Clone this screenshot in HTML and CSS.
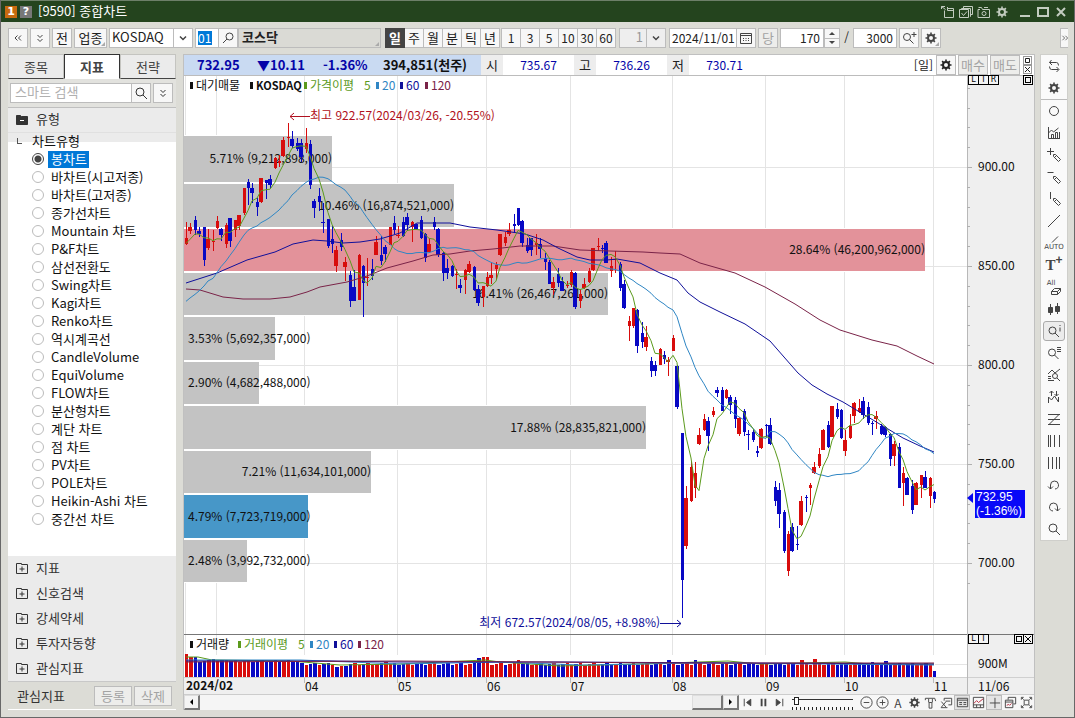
FILE: index.html
```html
<!DOCTYPE html>
<html lang="ko">
<head>
<meta charset="utf-8">
<title>[9590] 종합차트</title>
<link rel="stylesheet" href="styles.css">
</head>
<body>
<svg class="sprite" aria-hidden="true">
  <symbol id="dleft" viewBox="0 0 16 16"><path d="M7.500 5.500 5 8l2.500 2.500M11 5.500 8.500 8l2.500 2.500"/></symbol>
  <symbol id="dright" viewBox="0 0 16 16"><path d="M4.500 5l3 3-3 3M8.500 5l3 3-3 3"/></symbol>
  <symbol id="ddown" viewBox="0 0 16 16"><path d="M5.500 5 8 7.500 10.500 5M5.500 9 8 11.500 10.500 9"/></symbol>
  <symbol id="mag" viewBox="0 0 16 16"><circle cx="7" cy="7" r="4"/><path d="m10 10 4 4"/></symbol>
  <symbol id="magr" viewBox="0 0 16 16"><circle cx="9.500" cy="6.500" r="3.500"/><path d="m7 9-4 4"/></symbol>
  <symbol id="magplus" viewBox="0 0 16 16"><circle cx="6" cy="7" r="3.500"/><path d="m8.500 9.500 4 4M13 2v5M10.500 4.500h5"/></symbol>
  <symbol id="maginfo" viewBox="0 0 16 16"><circle cx="6.500" cy="7.500" r="3.500"/><path d="m9 10 4 4M14 2v1M14 4.500v4"/></symbol>
  <symbol id="maglist" viewBox="0 0 16 16"><circle cx="6" cy="7.500" r="3.500"/><path d="m8.500 10 4 4M11 2.500h4M11 4.500h4M11 6.500h4"/></symbol>
  <symbol id="gear" viewBox="0 0 16 16"><circle cx="8" cy="8" r="3" stroke-width="2"/><path stroke-width="1.600" d="M8 2.500v2M8 11.500v2M2.500 8h2M11.500 8h2M4.100 4.100l1.300 1.300M10.600 10.600l1.300 1.300M4.100 11.900l1.300-1.300M10.600 5.400l1.300-1.300"/></symbol>
  <symbol id="cal" viewBox="0 0 16 16"><path d="M2.500 3.500h11v10h-11zM2.500 5.500h11M5 8.500h1M7.500 8.500h1M10 8.500h1M5 10.500h1M7.500 10.500h1M10 10.500h1"/></symbol>
  <symbol id="wshare" viewBox="0 0 16 16"><path d="M7.500 4.500V3M4.500 6.500v7h9v-9h-6v2h6M1.500 2.500l4 3M1.500 5V2.500H5"/></symbol>
  <symbol id="wcheck" viewBox="0 0 16 16"><path d="M5.500 4V2.500h9v8H13M3.500 5V4.500h9v8H12M1.500 5.500h9v8h-9zM3.500 9l2 2.500 3.500-4"/></symbol>
  <symbol id="wcam" viewBox="0 0 16 16"><path d="M2.500 3.500h3l1 2h7v8h-11.500v-8h2M8 3.500h4"/><circle cx="8" cy="9.500" r="2"/></symbol>
  <symbol id="wmin" viewBox="0 0 16 16"><path stroke-width="2" d="M3 12h10"/></symbol>
  <symbol id="wmax" viewBox="0 0 16 16"><path stroke-width="2" d="M3 4h10v8H3z"/></symbol>
  <symbol id="wclose" viewBox="0 0 16 16"><path stroke-width="2" d="m4 4 8 8M12 4l-8 8"/></symbol>
  <symbol id="folder" viewBox="0 0 16 16"><path fill="currentColor" d="M2.500 4.500h4l1 1h6v8h-11z"/><path stroke="#fff" d="M6 9.500h4"/></symbol>
  <symbol id="plusbox" viewBox="0 0 16 16"><path d="M2.500 3.500h5v1h6v9h-11zM5.500 9h5M8 6.500v5"/></symbol>
  <symbol id="loop" viewBox="0 0 16 16"><path d="M5.500 2 3.500 4.500 6 7M3.500 4.500h7q2 0 2 3M10.500 9l2.500 2.500L10.500 14M12.500 11.500h-7q-2 0-2-3"/></symbol>
  <symbol id="circ" viewBox="0 0 16 16"><circle cx="8" cy="8" r="4.500"/></symbol>
  <symbol id="graph" viewBox="0 0 16 16"><path d="M2.500 2v11.500H14M2.500 8l3-3 2 2 5-4M5.500 13V9.500h2V13M9.500 13V7.500h2V13M13.500 13V7"/></symbol>
  <symbol id="penplus" viewBox="0 0 16 16"><path d="M4.500 1v7M1 4.500h7M7.500 7.500h2l5 5-2 2-5-5zM10.500 8.500l-2 2"/></symbol>
  <symbol id="penminus" viewBox="0 0 16 16"><path d="M1.500 3.500h6M7.500 7.500h2l5 5-2 2-5-5zM10.500 8.500l-2 2"/></symbol>
  <symbol id="penbar" viewBox="0 0 16 16"><path d="M4.500 1v7M7.500 7.500h2l5 5-2 2-5-5zM10.500 8.500l-2 2"/></symbol>
  <symbol id="slash" viewBox="0 0 16 16"><path d="M2 14 14 2"/></symbol>
  <symbol id="slashs" viewBox="0 0 16 8"><path d="M6 7.500 12 1.500"/></symbol>
  <symbol id="eraser" viewBox="0 0 16 9"><path d="M8.500 1.500h6l-3 3h-6zM5.500 4.500v3h6l3-3v-3M11.500 4.500v3"/></symbol>
  <symbol id="candles" viewBox="0 0 16 16"><path d="M4.500 3v11M11.500 2v11"/><path fill="currentColor" d="M2.500 6.500h4v5h-4zM9.500 5.500h4v5h-4z"/></symbol>
  <symbol id="chartmag" viewBox="0 0 16 16"><path d="M2 7l4-4 3 3 5-4M2 9.500h3M2 11.500h3M2 13.500h6"/><circle cx="9" cy="9" r="2.500"/><path d="m11 11 3 3"/></symbol>
  <symbol id="updown" viewBox="0 0 16 16"><path d="M2.500 14V8l3 3 3-4 4 6V8M5.500 7V2M3.500 4l2-2 2 2M10.500 2v5M8.500 5l2 2 2-2"/></symbol>
  <symbol id="zlines" viewBox="0 0 16 16"><path d="M2 3.500h12M2 8.500h12M2 13.500h12M13 3.500l-10 10"/></symbol>
  <symbol id="bars1" viewBox="0 0 16 16"><path d="M2.500 2v12M4.500 2v12M8.500 2v12M13.500 2v12"/></symbol>
  <symbol id="bars2" viewBox="0 0 16 16"><path d="M2.500 2v12M6.500 2v12M10.500 2v12M13.500 2v12"/></symbol>
  <symbol id="undo" viewBox="0 0 16 16"><path d="M4.500 12V8a4 4 0 1 1 4.500 4M2 9.500 4.500 12 7 9.500"/></symbol>
  <symbol id="redo" viewBox="0 0 16 16"><path d="M11.500 12V8A4 4 0 1 0 7 12M9 9.500l2.500 2.500L14 9.500"/></symbol>
  <symbol id="first" viewBox="0 0 16 16"><path d="M4.500 4v8"/><path fill="currentColor" d="M11.500 4.500v7L7 8z"/></symbol>
  <symbol id="pause" viewBox="0 0 16 16"><path stroke-width="2" d="M6 4v8M10 4v8"/></symbol>
  <symbol id="last" viewBox="0 0 16 16"><path d="M11.500 4v8"/><path fill="currentColor" d="M4.500 4.500v7L9 8z"/></symbol>
  <symbol id="cminus" viewBox="0 0 16 16"><circle cx="8" cy="8" r="6"/><path d="M5 8h6"/></symbol>
  <symbol id="cplus" viewBox="0 0 16 16"><circle cx="8" cy="8" r="6"/><path d="M5 8h6M8 5v6"/></symbol>
  <symbol id="hammer" viewBox="0 0 16 16"><path d="M2.500 5.500v-2h10l1 3M6 4v4M10 4v4M6.500 8h3v6h-3z"/></symbol>
  <symbol id="export" viewBox="0 0 16 16"><path d="M5.500 6V3.500h8v7H10M7 6.500h5M2.500 7l5 6M7.500 7l-5 6M2 13.500h7"/></symbol>
  <symbol id="panel" viewBox="0 0 16 16"><path d="M2.500 3.500h11v9h-11zM2.500 5.500h11M4.500 8h3M4.500 10h3M9 8h3M9 10h3"/></symbol>
  <symbol id="mini" viewBox="0 0 16 16"><path d="M2.500 2.500h11v11h-11zM2.500 10.500h11M6 10.500v3M10 10.500v3"/><path stroke="#b3263c" d="m3 9 3-3 2 2 5-4"/></symbol>
  <symbol id="cross" viewBox="0 0 16 16"><path d="M8.500 3v11M3 8.500h11"/></symbol>
  <symbol id="stack" viewBox="0 0 16 16"><path d="M5.500 5V2.500h8v7H11M2.500 5.500h8v8h-8zM2.500 7.500h8"/><path stroke="#b3263c" d="m4 11 2-1 1 1 2-2"/></symbol>
  <symbol id="full" viewBox="0 0 16 16"><path d="M5.500 5.500h5v5h-5zM2.500 5V2.500H5M11 2.500h2.500V5M13.500 11v2.500H11M5 13.500H2.500V11M3 3l2 2M13 3l-2 2M3 13l2-2M13 13l-2-2"/></symbol>
</svg>

<div class="window">
  <header class="titlebar">
    <span class="badge badge-one">1</span><span class="badge badge-help">?</span>
    <h1 class="title">[9590] 종합차트</h1>
    <div class="wintools">
      <button aria-label="내보내기"><svg><use href="#wshare"/></svg></button>
      <button aria-label="창 선택"><svg><use href="#wcheck"/></svg></button>
      <button aria-label="화면 캡처"><svg><use href="#wcam"/></svg></button>
      <button aria-label="환경설정"><svg><use href="#gear"/></svg></button>
    </div>
    <div class="winbtns">
      <button aria-label="최소화"><svg><use href="#wmin"/></svg></button>
      <button aria-label="최대화"><svg><use href="#wmax"/></svg></button>
      <button aria-label="닫기"><svg><use href="#wclose"/></svg></button>
    </div>
  </header>

  <div class="toolbar">
    <button class="btn sq" aria-label="이전"><svg><use href="#dleft"/></svg></button>
    <button class="btn sq" aria-label="펼치기"><svg><use href="#ddown"/></svg></button>
    <button class="btn sq">전</button>
    <button class="btn wide corner">업종</button>
    <select class="pick market" aria-label="시장"><option>KOSDAQ</option></select>
    <div class="joined">
      <div class="code"><input class="codein" value="01" aria-label="업종코드"></div>
      <button class="btn sq" aria-label="종목 찾기"><svg><use href="#magr"/></svg></button>
      <output class="name corner">코스닥</output>
    </div>
    <div class="group periods">
      <button class="btn on">일</button><button class="btn">주</button><button class="btn">월</button><button class="btn">분</button><button class="btn">틱</button><button class="btn">년</button>
    </div>
    <div class="group">
      <button class="btn">1</button><button class="btn">3</button><button class="btn">5</button><button class="btn">10</button><button class="btn">30</button><button class="btn">60</button>
    </div>
    <select class="pick unit" aria-label="주기" disabled><option>1</option></select>
    <div class="joined">
      <input class="field date" value="2024/11/01" aria-label="조회일">
      <button class="btn sq" aria-label="달력"><svg><use href="#cal"/></svg></button>
    </div>
    <button class="btn sq" disabled>당</button>
    <div class="joined">
      <input class="field count" value="170" aria-label="표시 개수">
      <div class="spin"><button aria-label="증가"><i class="up"></i></button><button aria-label="감소"><i class="down"></i></button></div>
    </div>
    <span class="sep">/</span>
    <input class="field count" value="3000" aria-label="전체 개수">
    <button class="btn sq" aria-label="확대"><svg><use href="#magplus"/></svg></button>
    <button class="btn sq corner" aria-label="설정"><svg><use href="#gear"/></svg></button>
    <button class="btn more" aria-label="더보기"><svg><use href="#dright"/></svg></button>
  </div>

  <div class="content">
    <aside class="side">
      <nav class="tabs"><button class="tab">종목</button><button class="tab active">지표</button><button class="tab">전략</button></nav>
      <div class="search">
        <input class="searchin" placeholder="스마트 검색" aria-label="스마트 검색">
        <button class="btn sq" aria-label="검색"><svg><use href="#mag"/></svg></button>
        <button class="btn sq fold" aria-label="펼치기"><svg><use href="#ddown"/></svg></button>
      </div>
      <button class="cat open"><svg><use href="#folder"/></svg>유형</button>
      <fieldset class="tree">
        <legend>차트유형</legend>
        <label><input type="radio" name="t" checked><span>봉차트</span></label>
        <label><input type="radio" name="t"><span>바차트(시고저종)</span></label>
        <label><input type="radio" name="t"><span>바차트(고저종)</span></label>
        <label><input type="radio" name="t"><span>종가선차트</span></label>
        <label><input type="radio" name="t"><span>Mountain 차트</span></label>
        <label><input type="radio" name="t"><span>P&amp;F차트</span></label>
        <label><input type="radio" name="t"><span>삼선전환도</span></label>
        <label><input type="radio" name="t"><span>Swing차트</span></label>
        <label><input type="radio" name="t"><span>Kagi차트</span></label>
        <label><input type="radio" name="t"><span>Renko차트</span></label>
        <label><input type="radio" name="t"><span>역시계곡선</span></label>
        <label><input type="radio" name="t"><span>CandleVolume</span></label>
        <label><input type="radio" name="t"><span>EquiVolume</span></label>
        <label><input type="radio" name="t"><span>FLOW차트</span></label>
        <label><input type="radio" name="t"><span>분산형차트</span></label>
        <label><input type="radio" name="t"><span>계단 차트</span></label>
        <label><input type="radio" name="t"><span>점 차트</span></label>
        <label><input type="radio" name="t"><span>PV차트</span></label>
        <label><input type="radio" name="t"><span>POLE차트</span></label>
        <label><input type="radio" name="t"><span>Heikin-Ashi 차트</span></label>
        <label><input type="radio" name="t"><span>중간선 차트</span></label>
      </fieldset>
      <button class="cat"><svg><use href="#plusbox"/></svg>지표</button>
      <button class="cat"><svg><use href="#plusbox"/></svg>신호검색</button>
      <button class="cat"><svg><use href="#plusbox"/></svg>강세약세</button>
      <button class="cat"><svg><use href="#plusbox"/></svg>투자자동향</button>
      <button class="cat"><svg><use href="#plusbox"/></svg>관심지표</button>
      <div class="sidefoot"><span>관심지표</span><button class="btn" disabled>등록</button><button class="btn" disabled>삭제</button></div>
    </aside>

    <main class="main">
      <div class="quote">
        <div class="now"><b class="last">732.95</b><b class="diff">▼10.11</b><b class="rate">-1.36%</b><b class="vol">394,851(천주)</b></div>
        <span class="k">시</span><span class="v">735.67</span>
        <span class="k">고</span><span class="v">736.26</span>
        <span class="k">저</span><span class="v">730.71</span>
        <span class="mode">[일]</span>
        <button class="btn sq" aria-label="차트 설정"><svg><use href="#gear"/></svg></button>
        <button class="btn trade" disabled>매수</button>
        <button class="btn trade" disabled>매도</button>
        <div class="mini">
          <button aria-label="확대"><svg viewBox="0 0 9 9"><path d="M2.500 2.500h4v4h-4z"/></svg></button>
          <button aria-label="닫기"><svg viewBox="0 0 9 9"><path d="m2 2 5 5M7 2 2 7"/></svg></button>
        </div>
      </div>
      <div class="stage">
        <svg id="chart" class="chart" viewBox="184 76 850 618" role="img" aria-label="KOSDAQ 일봉 차트"></svg>
        <div class="tags tags-l"><button>L</button><button>I</button><button>R</button></div>
        <div class="tags tags-r"><button aria-label="확대"><i></i></button></div>
        <div class="tags tags-l low"><button>L</button><button>I</button></div>
        <div class="tags tags-r low"><button aria-label="확대"><i></i></button><button aria-label="닫기"><svg viewBox="0 0 8 8"><path d="m1 1 6 6M7 1 1 7"/></svg></button></div>
      </div>
      <div class="bottom">
        <div class="scroll"><button class="sbtn" aria-label="왼쪽"><i class="lt"></i></button><div class="track"><div class="thumb"></div></div><button class="sbtn" aria-label="오른쪽"><i class="rt"></i></button></div>
        <div class="play">
          <button aria-label="처음"><svg><use href="#first"/></svg></button>
          <button aria-label="일시정지"><svg><use href="#pause"/></svg></button>
          <button aria-label="마지막"><svg><use href="#last"/></svg></button>
        </div>
        <input class="speed" type="range" min="0" max="100" value="4" aria-label="속도">
        <div class="play tools">
          <button aria-label="축소"><svg><use href="#cminus"/></svg></button>
          <button aria-label="확대"><svg><use href="#cplus"/></svg></button>
          <button>A</button>
          <button aria-label="설정"><svg><use href="#gear"/></svg></button>
          <button aria-label="도구"><svg><use href="#hammer"/></svg></button>
          <button aria-label="내보내기"><svg><use href="#export"/></svg></button>
          <button class="sel" aria-label="데이터"><svg><use href="#panel"/></svg></button>
          <button aria-label="미니차트"><svg><use href="#mini"/></svg></button>
          <button class="sel" aria-label="십자선"><svg><use href="#cross"/></svg></button>
          <button aria-label="겹치기"><svg><use href="#stack"/></svg></button>
          <button aria-label="전체화면"><svg><use href="#full"/></svg></button>
        </div>
      </div>
    </main>

    <nav class="rail">
      <button aria-label="새로고침"><svg><use href="#loop"/></svg></button>
      <button class="cut" aria-label="설정"><svg><use href="#gear"/></svg></button>
      <button aria-label="원"><svg><use href="#circ"/></svg></button>
      <button aria-label="그래프"><svg><use href="#graph"/></svg></button>
      <button aria-label="십자 그리기"><svg><use href="#penplus"/></svg></button>
      <button aria-label="수평선 그리기"><svg><use href="#penminus"/></svg></button>
      <button aria-label="수직선 그리기"><svg><use href="#penbar"/></svg></button>
      <button aria-label="추세선"><svg><use href="#slash"/></svg></button>
      <button class="auto"><svg><use href="#slashs"/></svg><span>AUTO</span></button>
      <button class="letter">T<sup>+</sup></button>
      <button class="all"><span>All</span><svg><use href="#eraser"/></svg></button>
      <button aria-label="봉"><svg><use href="#candles"/></svg></button>
      <button class="sel" aria-label="정보"><svg><use href="#maginfo"/></svg></button>
      <button aria-label="목록"><svg><use href="#maglist"/></svg></button>
      <button aria-label="차트 검색"><svg><use href="#chartmag"/></svg></button>
      <button aria-label="등락"><svg><use href="#updown"/></svg></button>
      <button aria-label="되돌림"><svg><use href="#zlines"/></svg></button>
      <button aria-label="피보나치 시간대"><svg><use href="#bars1"/></svg></button>
      <button aria-label="등간격선"><svg><use href="#bars2"/></svg></button>
      <button aria-label="실행 취소"><svg><use href="#undo"/></svg></button>
      <button aria-label="다시 실행"><svg><use href="#redo"/></svg></button>
      <button aria-label="돋보기"><svg><use href="#mag"/></svg></button>
    </nav>
  </div>
</div>
<script src="chart.js"></script>
</body>
</html>
```
FILE: styles.css
```css
* { box-sizing: border-box; }
body { margin: 0; font: 13px/16px "Noto Sans CJK KR", "Noto Sans", sans-serif; color: #222; }
button, input, select, output { font: inherit; color: inherit; margin: 0; padding: 0; border-radius: 0; }
button { background: none; border: 0; display: flex; align-items: center; justify-content: center; }
svg { width: 16px; height: 16px; fill: none; stroke: currentColor; flex: none; }
.sprite { display: none; }

.window { min-height: 100vh; display: flex; flex-direction: column; background: #dcdcd6; border: 1px solid #686868; border-top: 0; }
.titlebar { height: 22px; display: flex; align-items: center; gap: 3px; padding: 0 5px 0 4px; background: #24441e; border-top: 1px solid #6d7f69; color: #dfe5dc; }
.badge { width: 12px; height: 12px; font: bold 11px/12px "DejaVu Sans", sans-serif; text-align: center; color: #fff; }
.badge-one { background: #c76a10; }
.badge-help { background: #777; }
.title { flex: 1; margin: 0 0 0 3px; padding-bottom: 2px; font-size: 13px; font-weight: 400; color: #fff; }
.wintools, .winbtns { display: flex; gap: 2px; color: #c3ccc0; }
.winbtns { margin-left: 4px; }

.toolbar { display: flex; gap: 2px; padding: 6px 6px 6px 7px; height: 32px; font-size: 12px; }
.toolbar svg { color: #444; }
.btn { height: 20px; background: #f7f7f7; border: 1px solid #bcbcbc; position: relative; white-space: nowrap; font-size: 13px; }
.btn:disabled { color: #a3a3a3; background: #ededeb; }
.sq { width: 20px; flex: none; }
.wide { width: 33px; }
.corner { position: relative; }
.corner::after { content: ""; position: absolute; right: 1px; bottom: 1px; border: 2px solid #aaa; border-top-color: transparent; border-left-color: transparent; }
.pick { height: 20px; border: 1px solid #bcbcbc; background-color: #fff; appearance: none; padding: 0 22px 2px 2px; font-size: 13px; line-height: 16px;
  background-image: url("data:image/svg+xml,%3Csvg xmlns='http://www.w3.org/2000/svg' width='19' height='18' fill='none'%3E%3Cpath stroke='%23bcbcbc' d='M.5 0v18'/%3E%3Cpath stroke='%23444' stroke-width='1.500' d='m7 7.500 3 3 3-3'/%3E%3C/svg%3E");
  background-position: right center; background-repeat: no-repeat; }
.market { width: 84px; }
.unit { width: 47px; text-align-last: right; color: #999; background-color: #eee; opacity: 1; margin: 0 1px; }
.joined { display: flex; }
.code { width: 23px; height: 20px; padding: 2px; background: #fff; border: 1px solid #bcbcbc; border-right: 0; }
.codein { display: block; width: 14px; height: 14px; border: 0; background: #0078d7; color: #fff; font-size: 12px; line-height: 14px; }
.name { width: 143px; height: 20px; padding: 0 3px; font-weight: 700; border: 1px solid #bcbcbc; background: #dadad5; font-size: 13px; }
.group { display: flex; }
.group .btn { width: 19px; border-left-width: 0; font-size: 12px; }
.group .btn:first-child { border-left-width: 1px; width: 20px; }
.periods { margin-left: 2px; margin-right: -1px; }
.periods .btn { font-size: 13px; }
.group .on { background: #444; border-color: #444; color: #fff; font-weight: 700; }
.field { height: 20px; border: 1px solid #bcbcbc; background: #fff; padding: 0 3px 2px; font-size: 12px; }
.date { width: 67px; padding: 0 0 2px 2px; border-right: 0; }
.count { width: 44px; text-align: right; }
.spin { width: 16px; display: flex; flex-direction: column; background: #f7f7f7; border: 1px solid #bcbcbc; }
.spin button { flex: 1; }
.spin button + button { border-top: 1px solid #bcbcbc; }
.up, .down { border: 3px solid transparent; }
.up { border-top: 0; border-bottom-color: #444; }
.down { border-bottom: 0; border-top-color: #444; }
.sep { width: 9px; text-align: center; line-height: 18px; }
.more { width: 8px; margin-left: auto; border-right: 0; }
.more svg { width: 12px; height: 12px; }

.content { flex: 1; display: flex; padding: 0 6px 7px 7px; align-items: stretch; }
.side { width: 168px; flex: none; display: flex; flex-direction: column; background: #ebebeb; color: #333; }
.tabs { display: flex; height: 25px; background: #dcdcd6; }
.tab { flex: 1; background: #ebebeb; border: 1px solid #c4c4c0; border-bottom-color: #444; color: #444; }
.tab.active { background: #fff; border-color: #333; border-bottom-color: #fff; font-weight: 700; }
.search { display: flex; height: 28px; padding: 4px 3px 4px 2px; background: #e2e2de; }
.searchin { flex: 1; min-width: 0; border: 1px solid #bcbcbc; border-right: 0; background: #fff; padding: 0 0 2px 4px; }
.searchin::placeholder { color: #b0b0b0; }
.fold { margin-left: 2px; }
.cat { height: 25px; justify-content: flex-start; padding: 0 0 2px 6px; gap: 6px; text-align: left; color: #333; }
.open { height: 26px; border-top: 1px solid #bfbfbf; border-bottom: 1px solid #e0e0e0; }
.tree { flex: 1; min-width: 0; margin: 0; padding: 0; border: 0; background: #fff; color: #111; }
.tree legend { position: relative; padding: 0 0 0 24px; height: 17px; }
.tree legend::before { content: ""; position: absolute; left: 9px; top: 5px; width: 4px; height: 5px; border-left: 1px solid #555; border-bottom: 1px solid #555; }
.tree label { display: flex; align-items: center; height: 18px; padding-left: 24px; }
.tree input { appearance: none; width: 12px; height: 12px; border: 1px solid #bbb; border-radius: 50%; background: #fff; }
.tree input:checked { border-color: #444; background: radial-gradient(#444 0 3px, #fff 4px); }
.tree span { margin-left: 4px; padding: 0 2px 2px 3px; line-height: 15px; }
.tree input:checked + span { background: #0078d7; color: #fff; }
.sidefoot { display: flex; align-items: center; gap: 2px; height: 29px; padding: 0 4px 0 9px; background: #dcdcd6; border-top: 1px solid #c8c8c8; border-bottom: 1px solid #fff; }
.sidefoot span { flex: 1; font-size: 13px; }
.sidefoot .btn { width: 38px; }

.main { flex: 1; min-width: 0; margin: 0 5px 0 7px; border: 1px solid #c0c0c0; border-bottom: 0; background: #f0f0f0; display: flex; flex-direction: column; }
.quote { display: flex; align-items: center; height: 21px; background: #fff; border-bottom: 1px solid #bcbcbc; font-size: 12px; }
.quote .btn { margin-right: 2px; }
.now { display: flex; align-items: center; height: 100%; width: 297px; padding-left: 13px; background: #c9daf2; color: #0404a8; font-size: 13px; white-space: nowrap; }
.now .last { width: 60px; }
.now .diff { width: 66px; }
.now .rate { width: 60px; }
.now .vol { color: #111; }
.k { width: 22px; line-height: 20px; text-align: center; background: #ededed; font-size: 13px; }
.v { width: 71px; text-align: center; color: #0404a8; }
.mode { flex: 1; text-align: right; padding-right: 3px; }
.quote .trade { width: 30px; }
.mini { width: 11px; margin-left: 1px; }
.mini button { width: 9px; height: 9px; border: 1px solid #999; }
.mini svg { width: 9px; height: 9px; }
.stage { position: relative; flex: 1; }
.chart { display: block; width: 100%; height: auto; stroke: none; font-size: 12px; }
.chart text { fill: #111; }
.chart .b { font-weight: 700; }
.chart .s { font-weight: 700; font-size: 11px; }
.chart .tag { font-family: "Liberation Sans", sans-serif; }
.tags { position: absolute; top: -1px; display: flex; }
.tags-l { left: calc(100% - 66px); }
.tags-r { right: 1px; }
.low { top: calc(90% + 2px); }
.tags button { width: 11px; height: 10px; border: 1px solid #000; margin-right: -1px; font: 8px/8px "DejaVu Sans", sans-serif; color: #000; background: #f4f4f4; }
.tags-r button { width: 10px; margin: 0 0 0 -1px; }
.tags svg { width: 8px; height: 8px; }
.tags i { width: 6px; height: 6px; border: 1px solid #000; }
.bottom { display: flex; align-items: center; height: 16px; background: #f7f7f7; border-top: 1px solid #ccc; }
.scroll { flex: 1; display: flex; height: 15px; }
.sbtn { width: 16px; background: #f4f4f4; border: 1px solid #ddd; border-right: 2px solid #777; border-bottom: 2px solid #777; }
.lt, .rt { border: 3px solid transparent; }
.lt { border-left: 0; border-right-color: #000; }
.rt { border-right: 0; border-left-color: #000; }
.track { flex: 1; display: flex; justify-content: flex-end; background: #f5f5f5; }
.thumb { width: 31px; background: #ededed; border: 1px solid #ddd; border-right: 2px solid #777; border-bottom: 2px solid #777; }
.play { display: flex; color: #444; }
.play button { width: 16px; height: 15px; font-size: 12px; }
.play svg { width: 15px; height: 15px; }
.play .sel { background: #e4e4e4; border: 1px solid #bbb; }
.speed { appearance: none; width: 61px; height: 14px; margin: 0 5px; background: linear-gradient(#333, #333) 0 3px / 100% 1px no-repeat, repeating-linear-gradient(90deg, #222 0 1px, transparent 1px 4px) 0 100% / 100% 3px no-repeat; }
.speed::-webkit-slider-thumb { appearance: none; width: 5px; height: 8px; margin-top: -4px; background: #fff; border: 1px solid #222; }
.rail { width: 28px; flex: none; align-self: flex-start; background: #fafafa; border: 1px solid #cfcfcb; color: #444; }
.rail button { width: 100%; height: 22px; position: relative; }
.rail .cut { height: 23px; border-bottom: 1px solid #bbb; }
.rail .sel { width: 22px; height: 20px; margin: 1px auto; border: 1px solid #aaa; border-radius: 3px; background: #ececec; }
.rail .auto, .rail .all { flex-direction: column; font: 7px/8px "DejaVu Sans", sans-serif; }
.rail .auto svg { height: 8px; }
.rail .all svg { height: 9px; }
.rail .all span { padding-right: 6px; }
.rail .letter { font: bold 15px/18px "Liberation Serif", serif; }
.rail sup { font: bold 12px/8px "Liberation Sans", sans-serif; align-self: flex-start; padding-top: 2px; }
```
FILE: chart.js
```js
const RED = '#d80c0c', BLUE = '#0808c4', OLIVE = '#5b9a1c', SKY = '#2f86c4', NAVY = '#10109a', WINE = '#7a2348';

// Candle batches: origin, then "high low top bottom direction" at a third of a unit.
const batches = [
  [100, `367 435 415 431 R,369 402 381 393 R,348 405 360 391 B,380 410 393 401 B,380 497 381 480 B,388 450 416 444 R,390 452 422 424 R,348 386 363 385 R,385 422 386 404 B,370 443 376 432 R,354 442 354 423 B,360 410 361 389 R,345 390 346 378 R,264 345 265 339 R,237 314 246 263 B,248 310 264 278 B,295 347 306 320 B,234 308 235 307 R,240 297 241 250 B,225 264 237 255 B,170 208 173 204 R,165 200 182 188 R,110 172 120 167 R,70 140 110 112 R,94 144 117 138 B,115 152 130 147 B,118 185 129 172 B,84 160 129 147 R,120 268 132 254 B,297 353 303 324 B,265 333 288 305 B,310 398 366 368 B,357 445 358 437 B,378 460 417 432 B,437 515 449 497 R,400 452 420 440 B,472 543 486 500 R,512 620 525 602 B,510 602 561 602 B,463 600 464 599 R,495 650 498 548 B,475 558 530 532 R,478 540 507 527 B,408 466 426 465 R,408 496 465 482 B,436 485 441 462 B,380 436 381 435 R,348 403 369 390 B,379 413 405 408 R,350 410 366 407 B,340 392 352 375 B,362 425 367 382 R,372 391 373 387 B,347 418 360 415 B,398 485 402 475 B,415 460 431 457 R,352 390 367 380 B,385 470 386 466 B,456 542 460 518 B,476 538 504 520 B`],
  [180, `254 292 257 287 B,268 327 281 283 R,296 338 315 323 B,268 342 271 300 R,243 278 251 275 R,257 334 261 330 B,316 378 328 370 B,317 380 318 351 R,276 322 290 318 R,250 312 285 293 R,247 300 254 267 R,162 228 163 224 R,155 199 171 189 R,128 168 149 161 R,102 160 132 137 B,84 137 84 136 B,120 200 123 189 B,173 220 194 212 B,175 229 175 211 B,163 224 190 194 R,173 234 191 208 B,220 270 234 246 B,240 312 246 311 B,292 344 306 324 R,263 322 282 308 B,291 332 303 332 B,303 324 315 319 R,270 320 276 316 R,275 388 280 381 B,328 384 341 363 R,294 326 311 323 R,265 308 273 305 R,203 272 204 269 R,175 213 198 199 R,194 220 203 208 B,183 250 188 248 B,232 290 258 272 R,212 278 238 239 R,245 334 252 324 B,300 387 311 384 B,408 482 423 438 R,384 444 385 438 R,388 518 391 497 B,427 505 459 486 B,438 512 471 501 R,532 592 543 572 B,543 587 555 573 B,503 555 507 554 R,513 552 525 536 B,530 587 540 545 R,464 514 474 512 R`],
  [340, `75 206 79 200 B,279 833 280 721 B,437 626 474 618 R,362 485 381 482 R,365 475 399 443 R,264 314 285 313 R,222 274 237 271 R,232 332 243 287 B,200 230 213 224 R,141 172 150 158 B,141 214 150 212 B,147 176 150 173 R,166 222 171 195 B,171 263 180 236 B,230 287 234 281 R,207 287 213 275 B,270 331 282 284 B,268 306 276 299 B,319 350 333 338 B,265 327 267 325 R,252 290 255 259 B,235 314 255 311 B,423 497 441 482 B,430 563 450 521 B,510 638 516 632 B,573 707 582 692 R,550 635 561 634 B,558 630 612 614 B,468 558 483 556 R,465 516 471 473 B,428 494 435 443 R,366 402 381 398 R,324 383 342 377 R,268 330 270 329 R,243 324 255 320 B,197 290 198 290 R,189 236 207 230 B,208 298 210 293 B,270 347 300 332 R,222 298 258 294 R,185 250 189 227 R,177 218 204 217 R,171 238 183 224 B,187 256 201 248 B,243 285 249 253 B,213 267 228 236 R,252 285 258 282 B,258 292 262 284 B,278 378 282 356 B,303 378 312 347 R,308 444 321 443 B,382 499 399 430 R,412 466 414 464 B,420 522 438 509 B,427 495 429 494 R,405 474 405 435 R,393 444 411 443 B,411 503 414 467 R,453 490 456 477 B`]
];
const candles = batches.flatMap(([base, rows]) => rows.split(',').map(row => {
  const p = row.split(' ');
  const [hi, lo, top, bot] = p.slice(0, 4).map(n => base + n / 3);
  return { hi, lo, top, bot, up: p[4] === 'R' };
}));
const step = 748 / (candles.length - 1);
const cx = i => Math.round(186 + i * step);

const out = [];
const rect = (x, y, w, h, f) => out.push(`<rect x="${x}" y="${y}" width="${w}" height="${h}" fill="${f}"/>`);
const line = (pts, c) => out.push(`<polyline points="${pts.map(p => p.join()).join(' ')}" fill="none" stroke="${c}"/>`);
const text = (x, y, s, c = '#111', extra = '') => out.push(`<text x="${x}" y="${y}" style="fill:${c}" ${extra}>${s}</text>`);

rect(184, 76, 783, 602, '#fff');
rect(967, 76, 67, 618, '#efefef');
rect(184, 678, 783, 16, '#efefef');

// Grid
const months = [[304, '04'], [397, '05'], [486, '06'], [570, '07'], [672, '08'], [765, '09'], [844, '10'], [933, '11']];
[185, 216, ...months.map(m => m[0])].forEach(x => rect(x, 76, 1, 602, '#e4e4e4'));
for (let i = 0; i < 5; i++) rect(184, 167 + i * 99, 783, 1, '#e4e4e4');
rect(184, 664, 783, 1, '#e4e4e4');

// Volume profile
[
  [136, 46, 148, '5.71% (9,212,898,000)'],
  [184, 43, 270, '10.46% (16,874,521,000)'],
  [229, 42, 741, '28.64% (46,200,962,000)', '#e3929a'],
  [273, 42, 424, '16.41% (26,467,261,000)'],
  [317, 43, 91, '3.53% (5,692,357,000)'],
  [362, 42, 75, '2.90% (4,682,488,000)'],
  [406, 43, 462, '17.88% (28,835,821,000)'],
  [451, 42, 187, '7.21% (11,634,101,000)'],
  [495, 43, 124, '4.79% (7,723,719,000)', '#4797c8'],
  [540, 42, 63, '2.48% (3,992,732,000)']
].forEach(([y, h, w, s, c = '#c3c3c3']) => {
  const base = y + Math.round(h / 2) + 4;
  rect(184, y - 1, w, h + 2, '#fff');
  rect(184, y, w, h, c);
  if (w < 140) text(188, base, s);
  else text(184 + w, base, s, '#111', 'text-anchor="end"');
});

// Candles
const barWidth = i => cx(i + 1) - cx(i) - 1;
candles.forEach((k, i) => {
  const c = k.up ? RED : BLUE, x = cx(i), w = barWidth(i);
  const hi = Math.round(k.hi), top = Math.round(k.top);
  rect(x, hi, 1, Math.max(1, Math.round(k.lo) - hi), c);
  rect(x + 2 - w, top, w, Math.max(1, Math.round(k.bot) - top), c);
});

// Moving averages
const close = candles.map(k => k.up ? k.top : k.bot);
const average = (n, seed) => close.map((_, i) => {
  if (i < seed.length) return [cx(i), 100 + seed[i] / 3];
  const part = close.slice(i - n + 1, i + 1);
  return [cx(i), part.reduce((a, b) => a + b) / n];
});
line([[186, 289], [200, 290], [223, 297], [243, 299], [270, 299], [290, 297], [307, 292], [320, 287], [347, 282], [367, 276], [387, 268], [413, 261], [433, 255], [450, 254], [470, 251], [493, 249], [520, 246], [553, 246], [580, 250], [610, 251], [643, 252], [660, 253], [680, 254], [700, 263], [735, 273], [765, 287], [795, 304], [820, 320], [840, 330], [872, 340], [897, 346], [917, 356], [934, 364]], WINE);
line([[186, 283], [217, 273], [247, 260], [275, 252], [293, 244], [313, 240], [327, 241], [343, 243], [360, 242], [380, 239], [400, 233], [417, 223], [437, 223], [450, 223], [470, 227], [497, 230], [525, 234], [543, 240], [558, 248], [577, 257], [590, 260], [607, 260], [617, 259], [640, 263], [660, 273], [677, 280], [688, 293], [700, 302], [720, 312], [745, 324], [770, 341], [798, 373], [812, 385], [827, 394], [843, 402], [863, 414], [883, 426], [903, 438], [920, 446], [934, 452]], NAVY);
line(average(20, [604, 594, 583, 573, 558, 543, 535, 518, 500, 483, 466, 446, 427, 405, 391, 384, 378, 368, 360]), SKY);
line(average(5, [430, 418, 402, 402]), OLIVE);

// High and low marks
const CRIMSON = '#b01020';
line([[310, 116.5], [290, 116.5]], CRIMSON);
line([[294, 113], [290, 116.5], [294, 120]], CRIMSON);
text(310, 120, '최고 922.57(2024/03/26, -20.55%)', CRIMSON);
line([[660, 623.5], [681, 623.5]], NAVY);
line([[677, 620], [681, 623.5], [677, 627]], NAVY);
text(660, 627, '최저 672.57(2024/08/05, +8.98%)', NAVY, 'text-anchor="end"');

// Legends
const legend = (y, items) => items.forEach(([x, s, c, kind]) => {
  if (kind !== 'plain') rect(x - 6, y - 8, 3, 7, c);
  text(x, y, s, c, kind === 'bold' ? 'class="s"' : '');
});
legend(90, [[196, '대기매물', '#111'], [256, 'KOSDAQ', '#111', 'bold'], [310, '가격이평', OLIVE], [364, '5', OLIVE, 'plain'], [382, '20', SKY], [406, '60', NAVY], [431, '120', WINE]]);
legend(649, [[196, '거래량', '#111'], [244, '거래이평', OLIVE], [298, '5', OLIVE, 'plain'], [316, '20', SKY], [340, '60', NAVY], [364, '120', WINE]]);

// Volume
rect(184, 655, 751, 22, '#fff');
const tall = { 0: 23, 1: 20, 2: 20, 6: 18, 9: 17, 34: 10, 35: 11, 36: 11, 45: 15, 66: 19, 67: 20, 68: 20, 75: 17, 109: 17, 115: 17, 139: 17, 142: 18, 155: 15, 158: 16, 169: 6 };
candles.forEach((k, i) => {
  const h = tall[i] || (i < 26 ? 15 : 12) + (i * 7 % 3);
  const up = i === 0 || close[i] <= close[i - 1];
  rect(cx(i) - 1, 677 - h, barWidth(i), h, up ? RED : BLUE);
});
line([[186, 657], [198, 657], [212, 660], [290, 661], [340, 665], [400, 664], [485, 660], [500, 662], [560, 666], [640, 664], [728, 661], [760, 664], [845, 662], [870, 664], [934, 664]], OLIVE);
line([[186, 660], [300, 660], [400, 664], [500, 662], [580, 665], [700, 663], [934, 665]], SKY);
line([[186, 661], [330, 661], [400, 662], [560, 662], [934, 664]], NAVY);
line([[186, 662], [400, 661], [680, 663], [934, 663]], WINE);

// Pane borders and axes
rect(184, 634, 850, 1, '#777');
rect(184, 677, 850, 1, '#d0d0d0');
rect(967, 76, 1, 618, '#b8b8b8');
for (let i = 0; i < 26; i++) {
  const y = Math.round(87.8 + i * 19.8);
  rect(967, y, i % 5 === 4 ? 5 : 3, 1, '#b0b0b0');
}
['900.00', '850.00', '800.00', '750.00', '700.00'].forEach((s, i) => text(978, 171 + i * 99, s));
text(978, 668, '900M');
text(978, 691, '11/06');
text(186, 690, '2024/02', '#111', 'class="b"');
months.forEach(([x, s]) => { rect(x, 678, 1, 5, '#bbb'); text(x + 1, 691, s); });
out.push('<path d="M967 498l6-5v10z" fill="#0808f0"/>');
rect(975, 490, 50, 28, '#0808f8');
text(976, 501, '732.95', '#fff', 'class="tag"');
text(976, 515, '(-1.36%)', '#fff', 'class="tag"');

document.getElementById('chart').innerHTML = out.join('');
```
